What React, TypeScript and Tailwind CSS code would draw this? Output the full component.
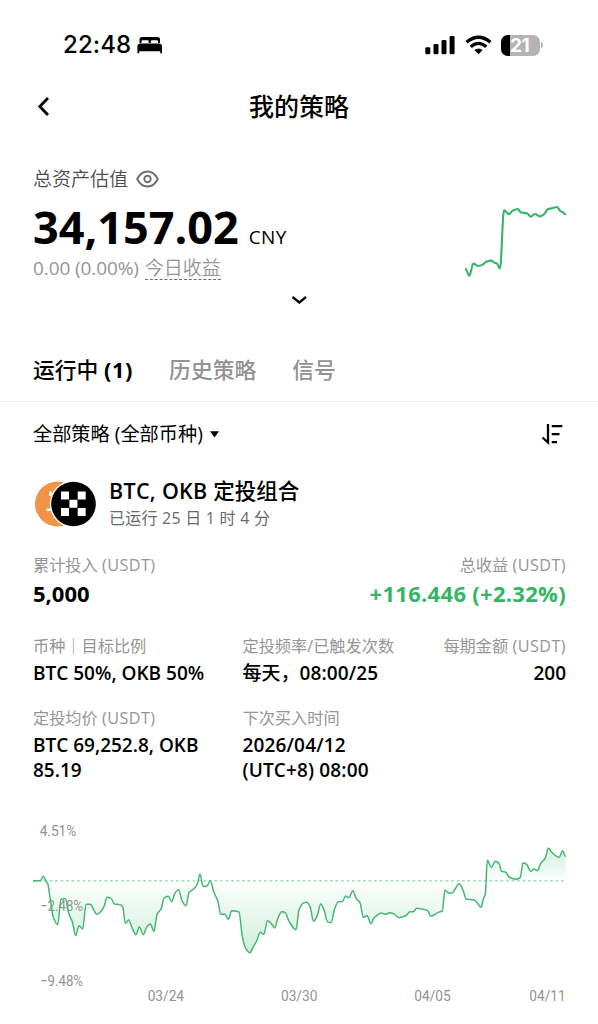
const SPARK: [number, number][] = [
  [78, 267], [89, 287], [101, 251], [117, 258], [130, 253], [140, 245], [155, 242], [164, 248], [172, 251],
  [181, 266], [193, 90], [208, 103], [219, 92], [235, 87], [243, 97], [262, 100], [273, 110], [286, 102],
  [300, 109], [315, 101], [324, 88], [340, 84], [352, 81], [362, 93], [370, 97], [377, 103],
];

const SERIES: [number, number][] = [
  [99, 212], [121, 212], [130, 199], [138, 214], [143, 220], [150, 262], [160, 322], [173, 344], [183, 268],
  [196, 266], [206, 310], [217, 335], [227, 377], [237, 347], [248, 357], [258, 283], [270, 283], [291, 313],
  [302, 305], [312, 290], [321, 262], [334, 266], [343, 282], [360, 284], [368, 290], [376, 340], [386, 330],
  [397, 355], [408, 374], [418, 351], [430, 374], [440, 352], [451, 342], [462, 364], [471, 314], [484, 295],
  [492, 264], [505, 259], [515, 275], [525, 249], [536, 239], [546, 272], [558, 287], [567, 248], [583, 235],
  [592, 222], [600, 192], [609, 229], [620, 229], [631, 212], [641, 245], [654, 275], [662, 313], [674, 312],
  [685, 328], [695, 302], [717, 306], [727, 380], [737, 415], [750, 428], [760, 410], [770, 393], [781, 367],
  [792, 373], [802, 332], [813, 340], [824, 354], [834, 324], [845, 305], [856, 308], [867, 334], [888, 359],
  [897, 300], [909, 280], [920, 277], [930, 290], [941, 334], [952, 316], [962, 282], [973, 302], [982, 335],
  [994, 338], [1003, 300], [1015, 275], [1027, 275], [1037, 258], [1047, 263], [1058, 242], [1069, 266],
  [1080, 278], [1090, 322], [1102, 317], [1112, 341], [1122, 325], [1144, 309], [1155, 313], [1170, 308],
  [1180, 311], [1197, 323], [1220, 315], [1228, 306], [1240, 305], [1250, 295], [1270, 298], [1283, 302],
  [1292, 319], [1315, 307], [1327, 303], [1335, 240], [1345, 249], [1358, 248], [1367, 234], [1378, 221],
  [1389, 240], [1399, 268], [1422, 269], [1432, 279], [1443, 292], [1450, 267], [1456, 252], [1462, 151],
  [1474, 172], [1486, 154], [1497, 160], [1505, 184], [1518, 187], [1527, 201], [1548, 208], [1561, 202],
  [1569, 158], [1580, 163], [1592, 184], [1602, 177], [1613, 182], [1622, 160], [1635, 146], [1645, 115],
  [1655, 126], [1677, 142], [1688, 122], [1697, 140],
];

// monotone cubic, so peaks stay rounded without overshooting
function smooth(pts: [number, number][]) {
  const slope = (i: number) => (pts[i + 1][1] - pts[i][1]) / (pts[i + 1][0] - pts[i][0]);
  const tan = pts.map((_, i) => {
    if (i === 0 || i === pts.length - 1) return 0;
    const a = slope(i - 1);
    const b = slope(i);
    return a * b <= 0 ? 0 : (2 * a * b) / (a + b);
  });
  let d = `M${pts[0][0]} ${pts[0][1]}`;
  for (let i = 1; i < pts.length; i++) {
    const [x0, y0] = pts[i - 1];
    const [x1, y1] = pts[i];
    const h = (x1 - x0) / 3;
    d += `C${x0 + h} ${y0 + tan[i - 1] * h} ${x1 - h} ${y1 - tan[i] * h} ${x1} ${y1}`;
  }
  return d;
}

const LINE = smooth(SERIES);

function StatusBar() {
  return (
    <div className="flex h-[90px] items-center pl-[63px] pr-[55px]">
      <span className="font-['Inter'] text-[24px] leading-6 font-medium tracking-[0.1px]">22:48</span>
      <svg className="ml-[6px]" width="26" height="18" viewBox="0 0 26 18">
        <path d="M2.5 7V3.5Q2.5 1 5 1H20.500Q23 1 23 3.500V7H21V5.300Q21 4.200 20 4.200H14.900Q13.800 4.200 13.800 5.300V7H11.700V5.300Q11.700 4.200 10.600 4.200H5.500Q4.500 4.200 4.500 5.300V7Z" />
        <path d="M.4 10.500Q.4 7.500 3.400 7.500H22Q25 7.500 25 10.500V17.300H23.200V15.300H2.200V17.300H.4Z" />
      </svg>
      <div className="ml-auto flex items-center">
        <svg width="31" height="20" viewBox="0 0 31 20">
          <rect x="0.300" y="12.300" width="5" height="7" rx="1.300" />
          <rect x="8.500" y="9" width="5" height="10.300" rx="1.300" />
          <rect x="16.500" y="5" width="5" height="14.300" rx="1.300" />
          <rect x="24.600" y="1" width="5" height="18.300" rx="1.300" />
        </svg>
        <svg className="ml-[9px]" width="27" height="20" viewBox="0 0 27 20">
          <g fill="none" stroke="#000" strokeWidth="3.300">
            <path d="M1.500 7.300Q13.500 -2.800 25.500 7.300" />
            <path d="M5.700 11.800Q13.500 5 21.300 11.800" />
          </g>
          <path d="M9.300 14.900Q13.500 11.900 17.700 14.900L13.500 19.200Z" />
        </svg>
        <div className="ml-[9px] flex h-[21px] w-[39px] overflow-hidden rounded-[7px] bg-[#b4b4b4]">
          <div className="h-full w-[9px] bg-black" />
          <span className="font-['Inter'] text-[19px] leading-[21px] font-bold tracking-[-0.5px] text-white">21</span>
        </div>
        <div className="ml-px h-[6px] w-[2px] rounded-r-full bg-[#b4b4b4]" />
      </div>
    </div>
  );
}

function Coins() {
  return (
    <svg width="64" height="48" viewBox="0 0 64 48">
      <circle cx="24.500" cy="24" r="22.500" fill="#f1944a" />
      <path d="M17.500 11.500V16M13.500 29.700H18.500" stroke="#fff" strokeWidth="2.500" />
      <circle cx="40.500" cy="24" r="23.600" fill="#fff" />
      <circle cx="40.500" cy="24" r="22.300" />
      <path
        d="M28 11.500h8v8h-8zM44.700 11.500h8v8h-8zM36.400 19.800h8v8h-8zM28 28.100h8v8h-8zM44.700 28.100h8v8h-8z"
        fill="#fff"
      />
    </svg>
  );
}

function ProfitChart() {
  return (
    <svg width="598" height="214" viewBox="0 0 1794 642" className="block">
      <defs>
        <linearGradient id="area" gradientUnits="userSpaceOnUse" x1="0" x2="0" y1="115" y2="428">
          <stop offset="0" stopColor="#35ba68" stopOpacity="0.22" />
          <stop offset="0.310" stopColor="#35ba68" stopOpacity="0.01" />
          <stop offset="1" stopColor="#35ba68" stopOpacity="0.24" />
        </linearGradient>
      </defs>
      <g fill="#929292" className="font-['Roboto']" fontSize="43">
        <text x="119" y="79" textLength="110" lengthAdjust="spacingAndGlyphs">4.51%</text>
        <text x="120" y="304" textLength="129" lengthAdjust="spacingAndGlyphs">−2.48%</text>
        <text x="120" y="529" textLength="129" lengthAdjust="spacingAndGlyphs">−9.48%</text>
        <text x="443" y="574" textLength="109" lengthAdjust="spacingAndGlyphs">03/24</text>
        <text x="843" y="574" textLength="109" lengthAdjust="spacingAndGlyphs">03/30</text>
        <text x="1243" y="574" textLength="109" lengthAdjust="spacingAndGlyphs">04/05</text>
        <text x="1588" y="574" textLength="109" lengthAdjust="spacingAndGlyphs">04/11</text>
      </g>
      <path d={`${LINE}V212H99Z`} fill="url(#area)" />
      <path d="M99 212.500H1697" stroke="#a5dfbc" strokeWidth="4.500" strokeDasharray="8.500 8" />
      <path d={LINE} fill="none" stroke="#43b873" strokeWidth="4.500" strokeLinejoin="round" />
    </svg>
  );
}

const LABEL = "text-[16.200px] leading-[22px] text-[#959595] whitespace-nowrap";
const VALUE = "mt-1 text-[19px] leading-[25px] font-semibold whitespace-nowrap";

function Unit() {
  return <span className="tracking-[0.450px]">(USDT)</span>;
}

export default function App() {
  return (
    <main className="h-[1024px] w-[598px] overflow-hidden bg-white font-['Open_Sans','Noto_Sans_CJK_SC',sans-serif] text-black">
      <StatusBar />

      <header className="grid h-8 grid-cols-3 items-center px-[34px]">
        <svg width="20" height="20" viewBox="0 0 20 20" fill="none" stroke="#000" strokeWidth="2.800">
          <path d="M14 2L5.800 10.500L14 19" />
        </svg>
        <h1 className="text-center text-[25px] leading-8 font-medium">我的策略</h1>
      </header>

      <section className="flex justify-between pt-[45px] pr-[29px] pl-[33px]">
        <div>
          <div className="flex h-6 items-center gap-2">
            <span className="text-[19px] leading-6 font-[350] text-[#4b4b4b]">总资产估值</span>
            <svg width="23" height="18" viewBox="0 0 23 18" fill="none" stroke="#6e6e6e" strokeWidth="1.900">
              <path d="M1.200 9Q5 1.500 11.500 1.500T21.800 9Q18 16.500 11.500 16.500T1.200 9Z" />
              <circle cx="11.500" cy="9" r="3.200" />
            </svg>
          </div>
          <div className="mt-2 flex h-[56px] items-baseline">
            <span className="text-[45px] leading-[56px] font-bold">34,157.02</span>
            <span className="ml-[10px] text-[19px] font-medium tracking-[0.3px]">CNY</span>
          </div>
          <div className="mt-px flex h-6 text-[19px] leading-6 text-[#959595]">
            <span className="tracking-[-0.100px]">0.00 (0.00%)</span>
            <span className="ml-[6px] border-b border-dashed border-[#6e6e6e] font-[350]">今日收益</span>
          </div>
        </div>
        <svg className="mt-[36px]" width="104" height="76" viewBox="76 69 312 228">
          <path d={smooth(SPARK)} fill="none" stroke="#35b566" strokeWidth="6.300" strokeLinecap="round" />
        </svg>
      </section>
      <div className="mt-3 flex h-4 items-center justify-center">
        <svg width="16" height="10" viewBox="0 0 16 10" fill="none" stroke="#000" strokeWidth="2.300">
          <path d="M1.500 2L8.300 7.500L15 2" />
        </svg>
      </div>

      <nav className="mt-8 flex h-[62px] items-center gap-[36px] border-b border-[#ededed] px-[33px] text-[21.800px] font-medium text-[#929292]">
        <span className="text-black">
          运行中 <b className="tracking-[0.6px]">(1)</b>
        </span>
        <span>历史策略</span>
        <span>信号</span>
      </nav>

      <div className="flex h-16 items-center pr-[35px] pl-[33px]">
        <span className="text-[19.200px]">全部策略 (全部币种)</span>
        <svg className="ml-[7px]" width="9" height="7" viewBox="0 0 9 7">
          <path d="M0 .3H9L4.500 6.500Z" />
        </svg>
        <svg className="ml-auto" width="22" height="22" viewBox="0 0 22 22" fill="none" stroke="#000" strokeWidth="2.300">
          <path d="M7 1V19.500L1.500 14.500M10.700 3.200H21.300M10.700 11.200H18.500M10.700 19.200H16" />
        </svg>
      </div>

      <section className="pr-[32px] pl-[33px]">
        <div className="flex h-[76px] items-center gap-3">
          <Coins />
          <div className="-mt-px">
            <h2 className="text-[21.500px] leading-[26px] font-medium">
              <span className="font-semibold tracking-[0.300px]">BTC, OKB</span> 定投组合
            </h2>
            <p className="mt-[2px] text-[16px] leading-6 tracking-[0.230px] text-[#6a6a6a]">已运行 25 日 1 时 4 分</p>
          </div>
        </div>

        <div className="mt-3 flex justify-between">
          <div>
            <p className={LABEL}>累计投入 <Unit /></p>
            <p className="mt-[3px] mb-px text-[22px] leading-7 font-bold">5,000</p>
          </div>
          <div className="text-right">
            <p className={LABEL}>总收益 <Unit /></p>
            <p className="mt-[3px] mb-px text-[22px] leading-7 font-bold tracking-[0.300px] text-[#35b566]">
              +116.446 (+2.32%)
            </p>
          </div>
        </div>

        <div className="mt-[27px] grid grid-cols-[209.500px_1fr_auto] gap-y-[21px]">
          <div>
            <p className={LABEL}>币种｜目标比例</p>
            <p className={VALUE}>BTC 50%, OKB 50%</p>
          </div>
          <div>
            <p className={LABEL}>定投频率/已触发次数</p>
            <p className={VALUE}>
              <span className="font-medium">每天，</span>
              <span className="tracking-[0.100px]">08:00/25</span>
            </p>
          </div>
          <div className="text-right">
            <p className={LABEL}>每期金额 <Unit /></p>
            <p className={VALUE}>200</p>
          </div>
          <div>
            <p className={LABEL}>定投均价 <Unit /></p>
            <p className={VALUE}>
              BTC 69,252.8, OKB
              <br />
              85.19
            </p>
          </div>
          <div>
            <p className={LABEL}>下次买入时间</p>
            <p className={`${VALUE} tracking-[0.150px]`}>
              2026/04/12
              <br />
              (UTC+8) 08:00
            </p>
          </div>
        </div>
      </section>

      <div className="mt-[27px]">
        <ProfitChart />
      </div>
    </main>
  );
}
